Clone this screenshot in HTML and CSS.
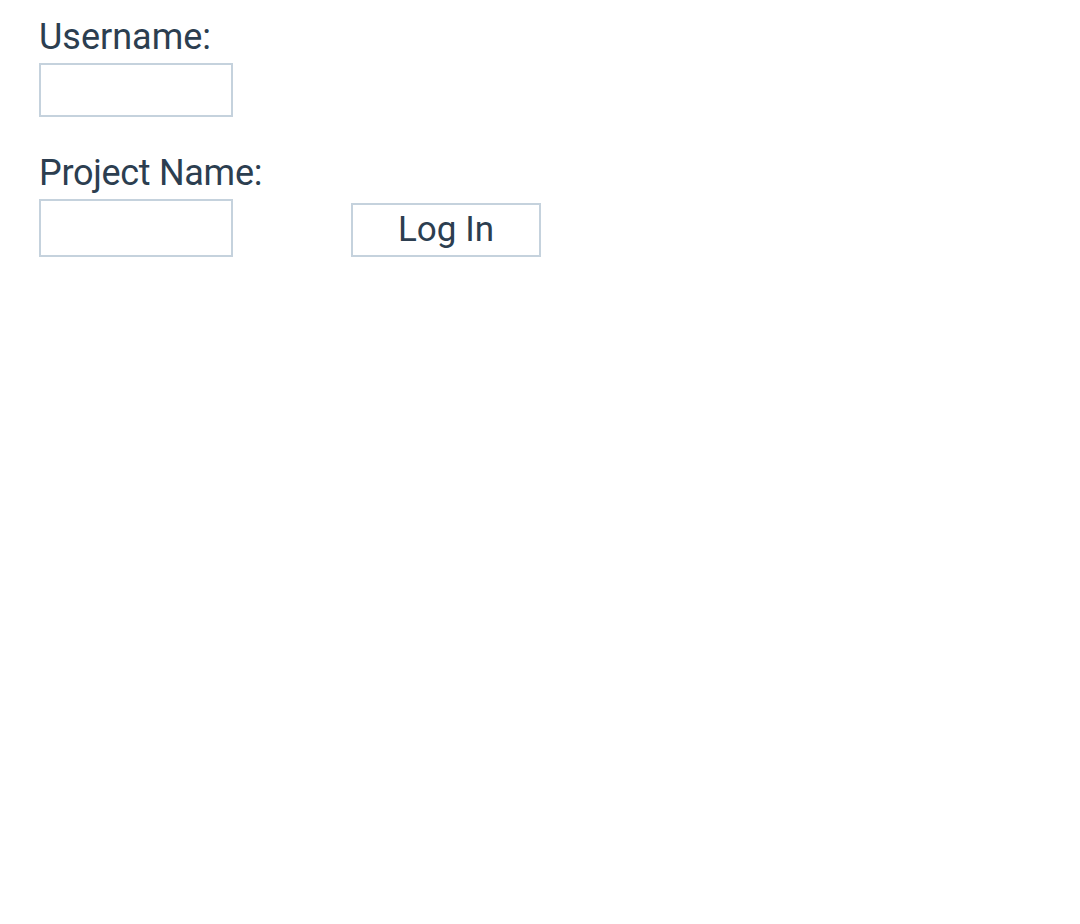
FILE: index.html
```html
<!DOCTYPE html>
<html>
<head>
<meta charset="utf-8">
<link rel="stylesheet" href="styles.css">
</head>
<body>
<form class="login">
  <label class="label" for="username">Username:</label>
  <div class="row">
    <input class="field" id="username" type="text">
  </div>
  <label class="label label-second" for="project">Project Name:</label>
  <div class="row row-bottom">
    <input class="field field-tall" id="project" type="text">
    <button class="btn" type="button">Log In</button>
  </div>
</form>
</body>
</html>
```
FILE: styles.css
```css
html, body {
  margin: 0;
  padding: 0;
  background: #ffffff;
}
body {
  font-family: Roboto, "Liberation Sans", sans-serif;
  color: #2c3e50;
}
.login {
  display: flex;
  flex-direction: column;
  align-items: flex-start;
  padding: 16px 0 0 39px;
}
.label {
  display: block;
  font-size: 36px;
  line-height: 42px;
  margin-bottom: 5px;
  color: #2c3e50;
}
.label-second {
  margin-top: 35px;
  letter-spacing: -0.3px;
}
.row {
  display: flex;
  align-items: flex-end;
}
.field {
  box-sizing: border-box;
  width: 194px;
  height: 54px;
  margin: 0;
  border: 2px solid #c5d2dd;
  border-radius: 0;
  background: #fff;
  outline: none;
  padding: 0 8px;
  font-family: inherit;
  font-size: 24px;
}
.field-tall {
  height: 58px;
}
.btn {
  box-sizing: border-box;
  width: 190px;
  height: 54px;
  margin: 0 0 0 118px;
  border: 2px solid #c5d2dd;
  border-radius: 0;
  background: #fff;
  color: #2c3e50;
  font-family: inherit;
  font-size: 35px;
  line-height: 50px;
  padding: 0;
  cursor: pointer;
}
```
